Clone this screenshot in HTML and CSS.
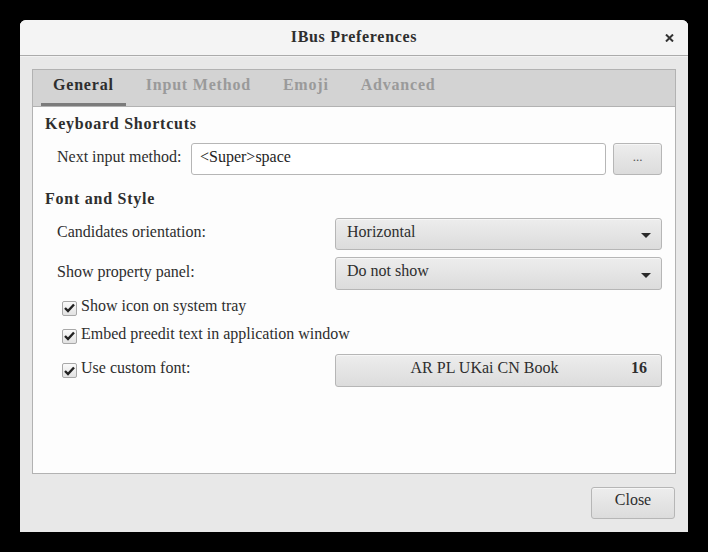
FILE: index.html
```html
<!DOCTYPE html>
<html>
<head>
<meta charset="utf-8">
<link rel="stylesheet" href="styles.css">
</head>
<body>
<div class="window">
  <div class="titlebar">
    <span class="title">IBus Preferences</span>
    <svg class="close-x" width="9" height="8" viewBox="0 0 9 8"><path d="M1 0.5 L8 7.5 M8 0.5 L1 7.5" stroke="#333" stroke-width="2"/></svg>
  </div>
  <div class="main">
    <div class="notebook">
      <div class="tabs">
        <div class="tab active">General</div>
        <div class="tab">Input Method</div>
        <div class="tab">Emoji</div>
        <div class="tab">Advanced</div>
      </div>
      <div class="page">
        <div class="heading">Keyboard Shortcuts</div>
        <div class="row row-entry">
          <span class="label">Next input method:</span>
          <div class="entry">&lt;Super&gt;space</div>
          <div class="btn dots">...</div>
        </div>
        <div class="heading heading2">Font and Style</div>
        <div class="row row-combo">
          <span class="label">Candidates orientation:</span>
          <div class="btn combo"><span>Horizontal</span><i class="arrow"></i></div>
        </div>
        <div class="row row-combo second">
          <span class="label">Show property panel:</span>
          <div class="btn combo"><span>Do not show</span><i class="arrow"></i></div>
        </div>
        <div class="check-row first">
          <span class="check"><svg width="11" height="10" viewBox="0 0 11 10"><path d="M1 5 L4 8 L10 1.5" fill="none" stroke="#222" stroke-width="2.4"/></svg></span>
          <span class="check-label">Show icon on system tray</span>
        </div>
        <div class="check-row">
          <span class="check"><svg width="11" height="10" viewBox="0 0 11 10"><path d="M1 5 L4 8 L10 1.5" fill="none" stroke="#222" stroke-width="2.4"/></svg></span>
          <span class="check-label">Embed preedit text in application window</span>
        </div>
        <div class="check-row font-row">
          <span class="check"><svg width="11" height="10" viewBox="0 0 11 10"><path d="M1 5 L4 8 L10 1.5" fill="none" stroke="#222" stroke-width="2.4"/></svg></span>
          <span class="check-label grow">Use custom font:</span>
          <div class="btn fontbtn"><span class="fontname">AR PL UKai CN Book</span><span class="fontsize">16</span></div>
        </div>
      </div>
    </div>
    <div class="footer">
      <div class="btn closebtn">Close</div>
    </div>
  </div>
</div>
</body>
</html>
```

FILE: styles.css
```css
html, body {
  margin: 0;
  padding: 0;
  background: #000;
  width: 708px;
  height: 552px;
  overflow: hidden;
}
body {
  padding: 20px 0 0 20px;
  box-sizing: border-box;
  font-family: "Liberation Serif", "Times New Roman", serif;
  font-size: 16px;
  color: #2e2e2e;
}
.window {
  width: 668px;
  height: 512px;
  background: #e8e8e8;
  border-radius: 6px 6px 0 0;
  display: flex;
  flex-direction: column;
  overflow: hidden;
}
.titlebar {
  height: 35px;
  flex: none;
  background: #f4f4f4;
  border-bottom: 1px solid #ababab;
  box-shadow: 0 1px 0 #f2f2f2;
  display: flex;
  align-items: center;
  justify-content: center;
  position: relative;
}
.title {
  font-weight: bold;
  font-size: 16px;
  letter-spacing: 0.7px;
  color: #2e2e2e;
  margin-bottom: 1px;
}
.close-x {
  position: absolute;
  right: 14px;
  top: 14px;
}
.main {
  flex: 1;
  display: flex;
  flex-direction: column;
  padding: 13px 12px 0 12px;
}
.notebook {
  height: 405px;
  border: 1px solid #b2b2b2;
  background: #fdfdfd;
  display: flex;
  flex-direction: column;
  box-sizing: border-box;
}
.tabs {
  height: 37px;
  flex: none;
  background: #d3d3d3;
  border-bottom: 1px solid #b2b2b2;
  box-sizing: border-box;
  display: flex;
  padding-left: 8px;
  gap: 8px;
}
.tab {
  padding: 0 12px 6px 12px;
  display: flex;
  align-items: center;
  font-weight: bold;
  letter-spacing: 0.8px;
  color: #9a9a9a;
  box-sizing: border-box;
  height: 36px;
}
.tab.active {
  color: #2e2e2e;
  border-bottom: 3px solid #7b7b7b;
  padding-bottom: 3px;
}
.page {
  padding: 6px 13px 0 12px;
  display: flex;
  flex-direction: column;
}
.heading {
  font-weight: bold;
  letter-spacing: 0.75px;
  line-height: 22px;
  height: 22px;
}
.heading2 {
  margin-top: 13px;
}
.row {
  display: flex;
  align-items: center;
  padding-left: 12px;
}
.row .label {
  flex: none;
  padding-bottom: 4px;
}
.row-entry {
  margin-top: 8px;
  height: 32px;
}
.row-entry .label {
  width: 134px;
}
.entry {
  flex: 1;
  height: 32px;
  box-sizing: border-box;
  border: 1px solid #b6b6b6;
  border-radius: 3px;
  background: #fff;
  padding: 0 8px 5px 8px;
  display: flex;
  align-items: center;
  color: #1e1e1e;
}
.btn {
  box-sizing: border-box;
  border: 1px solid #b6b6b6;
  border-radius: 3px;
  background: linear-gradient(#ededed, #dcdcdc);
  box-shadow: inset 0 1px 0 #f6f6f6;
  display: flex;
  align-items: center;
}
.dots {
  width: 49px;
  height: 32px;
  margin-left: 7px;
  justify-content: center;
  font-size: 13px;
  color: #555;
  padding-bottom: 4px;
}
.row-combo {
  margin-top: 8px;
  height: 32px;
  justify-content: space-between;
}
.row-combo.second {
  margin-top: 7px;
  height: 33px;
}
.combo {
  width: 327px;
  height: 100%;
  padding: 0 10px 5px 11px;
  justify-content: space-between;
}
.arrow {
  width: 0;
  height: 0;
  border-left: 5px solid transparent;
  border-right: 5px solid transparent;
  border-top: 5px solid #2a2a2a;
  margin-top: 8px;
}
.check-row {
  display: flex;
  align-items: center;
  height: 22px;
  margin-top: 6px;
  padding-left: 17px;
}
.check-row.first {
  margin-top: 7px;
}
.check {
  width: 15px;
  height: 15px;
  box-sizing: border-box;
  border: 1px solid #a8a8a8;
  border-radius: 2px;
  background: linear-gradient(#fafafa, #e2e2e2);
  display: flex;
  align-items: center;
  justify-content: center;
  flex: none;
  margin-right: 4px;
}
.check-label {
  margin-top: -5px;
}
.font-row {
  height: 33px;
  margin-top: 7px;
}
.grow {
  flex: 1;
}
.fontbtn {
  width: 327px;
  height: 33px;
  padding: 0 14px 6px 12px;
}
.fontname {
  flex: 1;
  text-align: center;
  padding-right: 10px;
}
.fontsize {
  font-weight: bold;
}
.footer {
  flex: 1;
  display: flex;
  justify-content: flex-end;
  align-items: center;
  padding-right: 1px;
}
.closebtn {
  width: 84px;
  height: 32px;
  justify-content: center;
  padding-bottom: 6px;
}
```
